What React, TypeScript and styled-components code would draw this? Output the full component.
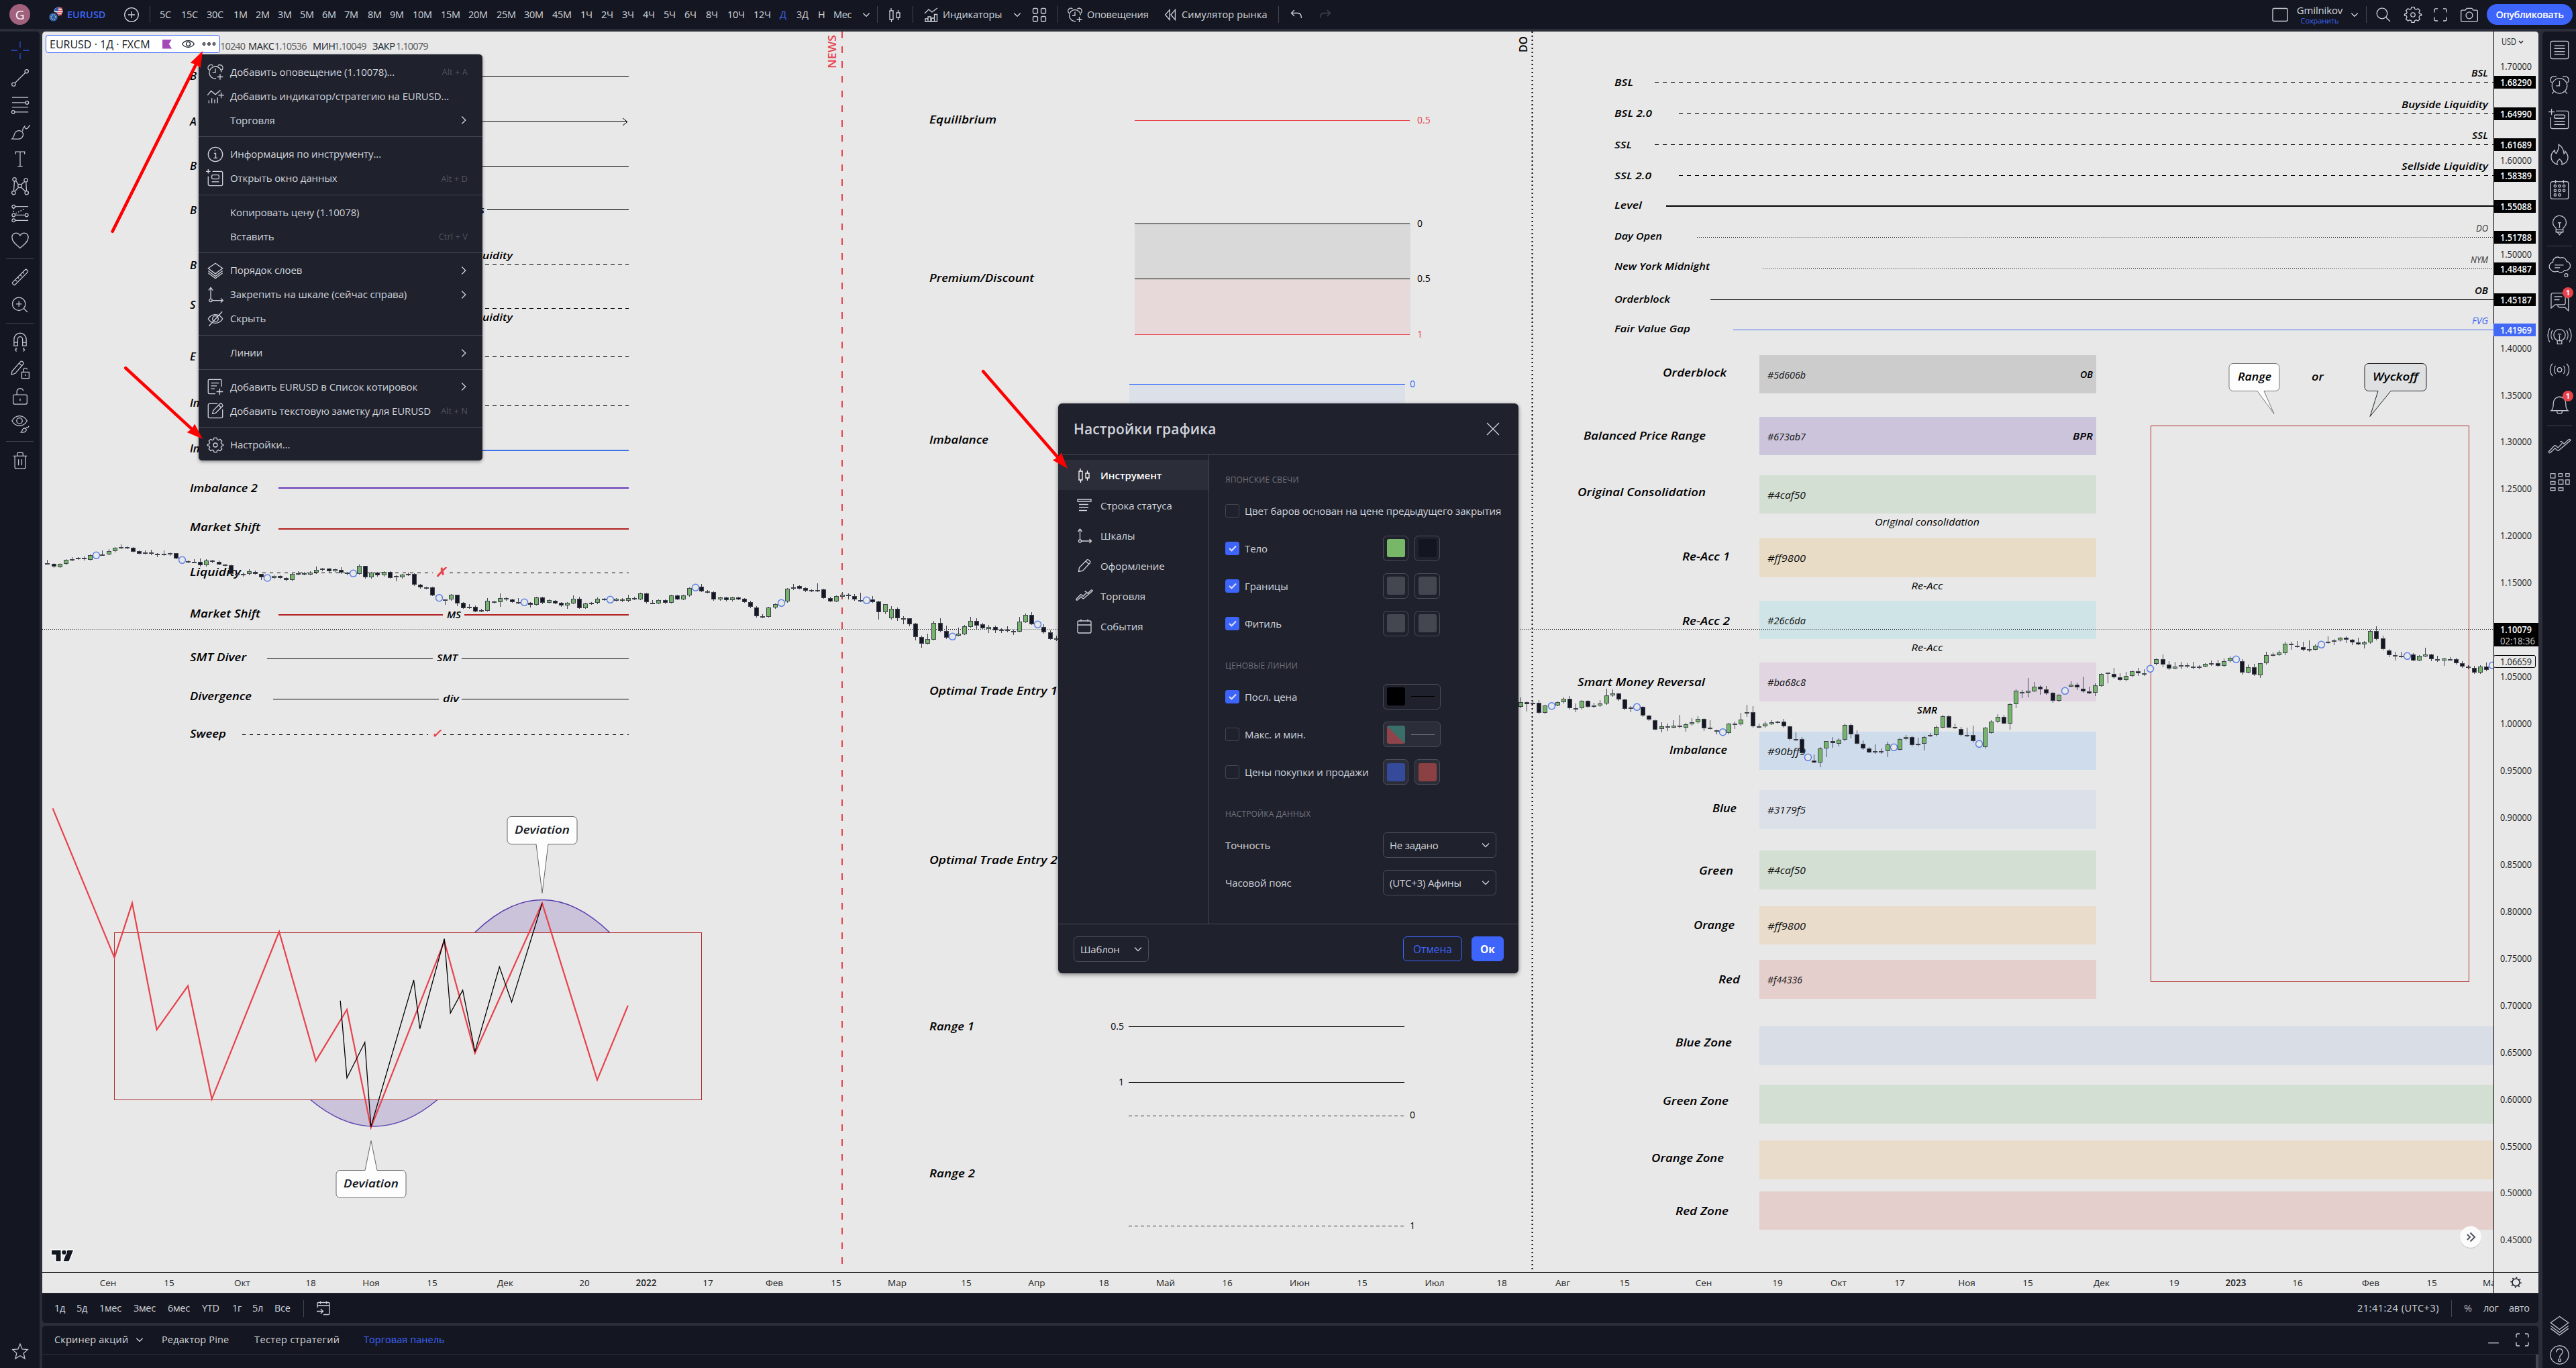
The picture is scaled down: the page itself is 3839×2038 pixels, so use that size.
import React from "react";
import styled, { createGlobalStyle, css } from "styled-components";

const font = `"Trebuchet MS", "Open Sans", "Noto Sans", sans-serif`;
const c = {
  panel: "#141721",
  gap: "#2b2d38",
  popup: "#1f212c",
  line: "#434651",
  text: "#d1d4dc",
  muted: "#787b86",
  blue: "#3d64fb",
  chart: "#e8e8e8",
  red: "#e8424c",
};

const Global = createGlobalStyle`
  * { box-sizing: border-box; }
  body { margin: 0; background: ${c.gap}; font-family: ${font}; }
`;

/* ---------- icons ---------- */
const Svg = styled.svg`
  display: block;
  flex: none;
  fill: none;
  stroke: currentColor;
  stroke-width: 1.3px;
  overflow: visible;
  & * { vector-effect: non-scaling-stroke; }
`;

const icons: Record<string, React.ReactNode> = {
  cross: <path d="M14 3v7.500M14 17.500V25M3 14h7.500M17.500 14H25" />,
  line: (
    <>
      <circle cx="6" cy="22" r="2.200" />
      <circle cx="22" cy="6" r="2.200" />
      <path d="M7.600 20.400L20.400 7.600" />
    </>
  ),
  fib: (
    <>
      <path d="M4 5h20M4 11.500h16.500M4 17h20M7.500 23H24" />
      <circle cx="22.500" cy="11.500" r="1.900" />
      <circle cx="5.500" cy="23" r="1.900" />
    </>
  ),
  brush: (
    <path d="M4 23c3-2 2-6 4.500-8.500s6-2 8 0 1.500 5.500-1 7.500S8 23 4 23zM17 13.500c0-3 1-4.500 2.500-6 0 3 2 3.500 3.500 2.500s1.500-2.500 3-4" />
  ),
  text: <path d="M8.500 8V5h11v3M14 5v18M11 23h6" />,
  xabcd: (
    <>
      <circle cx="7" cy="6" r="2.200" />
      <circle cx="21" cy="7" r="2.200" />
      <circle cx="13.500" cy="14" r="2.200" />
      <circle cx="6" cy="22.500" r="2.200" />
      <circle cx="22" cy="22.500" r="2.200" />
      <path d="M7 8.200l-.8 12.100M8.600 7.600l3.400 4.800M19.600 8.600L15 12.500M21.200 9.200l.6 11.100M12 15.800l-4.600 5M15.200 15.600l5.200 5.200" />
    </>
  ),
  projection: (
    <>
      <circle cx="6" cy="5.500" r="1.900" />
      <circle cx="6" cy="16" r="1.900" />
      <circle cx="22" cy="16" r="1.900" />
      <circle cx="6" cy="22.500" r="1.900" />
      <path d="M8 5.500h16M8 16h12M8 22.500h16" />
      <path d="M6 7.500V14M8.500 14L20 8" strokeDasharray="2 2" />
    </>
  ),
  heart: (
    <path d="M14 23.500C10 20 4 16 4 10.500 4 7 6.500 5 9 5c2.500 0 4 1.500 5 3.200C15 6.500 16.500 5 19 5c2.500 0 5 2 5 5.500C24 16 18 20 14 23.500z" />
  ),
  ruler: (
    <path d="M4.500 20.500l16-16c.8-.8 3.800 2.200 3 3l-16 16c-.8.8-3.800-2.200-3-3zM8 17l2 2M11 14l1.500 1.500M14 11l2 2M17 8l1.500 1.500" />
  ),
  zoomIn: (
    <>
      <circle cx="12.500" cy="13" r="8" />
      <path d="M18.500 18.500L23 23M12.500 9.500v7M9 13h7" />
    </>
  ),
  search: (
    <>
      <circle cx="12" cy="12" r="7.800" />
      <path d="M17.800 17.800L24 24" />
    </>
  ),
  magnet: (
    <path d="M6.500 19v-8a7.500 7.500 0 0 1 15 0v8h-4.500v-8a3 3 0 0 0-6 0v8zM6.500 15h4.500M17 15h4.500M8.500 21.500l1 1.500-1.500 1 1.500 2M19 21.500l-1 1.500 1.500 1-1.500 2" />
  ),
  pencilLock: (
    <path d="M4 17.500L14.500 5.500c1.500-1.500 5 1.500 3.500 3L8 20l-4.500 1.500zM13 7.500l3 3M16 18.500h9V26h-9zM18 18.500v-2.500a2.500 2.500 0 0 1 4.800-1M20.500 21v2" />
  ),
  lock: (
    <path d="M7 12.500h14a1.500 1.500 0 0 1 1.500 1.500v8a2 2 0 0 1-2 2h-13a2 2 0 0 1-2-2v-8A1.500 1.500 0 0 1 7 12.500zM10 12.500V8.500a4 4 0 0 1 7.800-1M14 17v3" />
  ),
  eyeBrush: (
    <>
      <path d="M4 11.500c4.500-8 14-8 18.500 0-4.500 8-14 8-18.500 0z" />
      <circle cx="13.200" cy="11.500" r="3.500" />
      <path d="M15 25.500c2-1 1-3 3-4.500 1.500-1 4 0 3.500 2s-3 3-6.500 2.500zM21 20c1-1 1 .5 2 0s1-1.500 2-2" />
    </>
  ),
  trash: (
    <path d="M5.500 8.500h17M10.500 8V5.500a1 1 0 0 1 1-1h5a1 1 0 0 1 1 1V8M7.500 8.500V22a2 2 0 0 0 2 2h9a2 2 0 0 0 2-2V8.500M12 12.500v7.500M16 12.500v7.500" />
  ),
  star: (
    <path d="M14 4l3 7.200 7.500.6-5.700 5 1.800 7.500L14 20.200l-6.600 4.100 1.800-7.500-5.700-5 7.500-.6z" />
  ),
  plusCircle: (
    <>
      <circle cx="14" cy="14" r="10.300" />
      <path d="M14 9v10M9 14h10" />
    </>
  ),
  chevron: <path d="M9 11.500l5 5 5-5" />,
  chevronRight: <path d="M11 8l6 6-6 6" />,
  candles: (
    <path d="M8 4v4M6 8h5v13H6zM8.500 21v4M18.500 7v4M16 11h5v7h-5zM18.500 18v4" />
  ),
  indicators: (
    <path d="M4 12l6-6 5 4 8-6M4 24h19M5 24v-4h4v4M9 24v-7h4v7M14 24v-5h4M18.500 24V13.500h4V24" />
  ),
  indicatorsPlus: (
    <path d="M3 13l5-6 6 5 7-6M5 24v-4M9 24v-7M13 24v-5M17 24v-8M22 9v8M18 13h8" />
  ),
  grid: (
    <>
      <rect x="4.500" y="4.500" width="7" height="7.500" rx="2" />
      <rect x="16.500" y="4.500" width="7" height="7.500" rx="2" />
      <rect x="4.500" y="16.500" width="7" height="7.500" rx="2" />
      <rect x="16.500" y="16.500" width="7" height="7.500" rx="2" />
    </>
  ),
  alarm: (
    <>
      <circle cx="14" cy="15" r="8.500" />
      <path d="M14 9.500V15h-4M5.200 11.500A4 4 0 0 1 10.500 5.200M22.800 11.500A4 4 0 0 0 17.500 5.200M7.500 21.500l-2 2.500M20.500 21.500l2 2.500" />
    </>
  ),
  alarmPlus: (
    <path d="M14 9.500V15h-4M5.200 11.500A4 4 0 0 1 10.500 5.200M22.800 11.500A4 4 0 0 0 17.500 5.200M15 23.500A8.500 8.500 0 1 1 22.500 14.500M20.500 17v8M16.500 21h8" />
  ),
  rewind: <path d="M13 6l-7 8 7 8zM22 6l-7 8 7 8z" />,
  undo: <path d="M11 7l-4.500 4.500L11 16M6.500 11.500H16c4 0 5.500 3 5.500 7.500" />,
  redo: <path d="M17 7l4.500 4.500L17 16M21.500 11.500H12c-4 0-5.500 3-5.500 7.500" />,
  rect: <rect x="3" y="4.500" width="22" height="19" rx="2" />,
  gear: (
    <>
      <circle cx="14" cy="14" r="2.800" />
      <path d="M12.200 4h3.600l.6 2.400 1.900.8 2.200-1.300 2.600 2.600-1.300 2.200.8 1.900 2.400.6v1.600l-2.400.6-.8 1.900 1.300 2.200-2.600 2.600-2.200-1.300-1.900.8-.6 2.400h-3.600l-.6-2.400-1.900-.8-2.200 1.300-2.600-2.600 1.300-2.200-.8-1.900-2.400-.6v-1.600l2.400-.6.8-1.900-1.300-2.200 2.600-2.600 2.200 1.300 1.900-.8z" />
    </>
  ),
  full: (
    <path d="M5 10.500V7a2 2 0 0 1 2-2h3M18 5h3a2 2 0 0 1 2 2v3.500M23 17.500V21a2 2 0 0 1-2 2h-3M10 23H7a2 2 0 0 1-2-2v-3.500" />
  ),
  camera: (
    <>
      <path d="M4 7.500h4.500L10.500 5h7l2 2.500H24a1.500 1.500 0 0 1 1.500 1.500v13a1.500 1.500 0 0 1-1.500 1.500H4A1.500 1.500 0 0 1 2.500 22V9A1.500 1.500 0 0 1 4 7.500z" />
      <circle cx="14" cy="14.800" r="4.600" />
    </>
  ),
  list: (
    <>
      <rect x="4" y="4" width="20" height="20" rx="2" />
      <path d="M8 9h12M8 12.300h12M8 15.700h12M8 19h12" />
    </>
  ),
  dataWindow: (
    <>
      <path d="M10 4h12a2 2 0 0 1 2 2v16a2 2 0 0 1-2 2H6a2 2 0 0 1-2-2V11M5 1.500v7M1.500 5h7" />
      <rect x="8" y="8.500" width="12" height="3.800" rx="1.500" />
      <path d="M8 15.700h12M8 19.200h12" />
    </>
  ),
  panelPlus: (
    <>
      <path d="M10 4h12a2 2 0 0 1 2 2v16a2 2 0 0 1-2 2H6a2 2 0 0 1-2-2V11M4 1v6M1 4h6" />
      <rect x="9" y="9" width="10" height="5.500" rx="1.500" />
      <path d="M9 18.500h10" />
    </>
  ),
  fire: (
    <path d="M11.500 25C7 23.500 4.500 20.500 4.500 16.500c0-4 2-6 4-7.500 0 2 .5 3 2 3.500 1.500-4 3.500-5 2.500-10 4 2 5.500 6 6 10.500 1-.5 1.300-1.500 1.200-3C22 12 23.500 14 23.500 17c0 4-2.500 6.800-7 8 1-2 .5-3.500-2.500-6-3 2.500-3.500 4-2.500 6z" />
  ),
  calendarDots: (
    <>
      <rect x="4" y="5" width="20" height="19.500" rx="2" />
      <path d="M9.500 3v4M18.500 3v4" />
      {[9, 14, 19].map((x) =>
        [10, 15, 20].map((y) =>
          x === 19 && y === 20 ? null : <circle key={`${x}${y}`} cx={x} cy={y} r="1.300" />
        )
      )}
    </>
  ),
  bulb: (
    <path d="M10 20v-2c-2-1.500-3.500-4-3.500-6.500a7.500 7.500 0 0 1 15 0c0 2.500-1.500 5-3.500 6.500v2zM10 20v2.500h8V20M11.500 22.500l2.500 3 2.500-3M12 12h4M14 12v6" />
  ),
  cloud: (
    <>
      <path d="M6.500 9C6 4.500 11 1.500 14.500 4c3.500-1.500 7 .5 7.500 4 4 .5 5.500 5.500 2.500 8.500-1.500 1.500-3 2-5 1.500-1.500 2.500-5 3.500-7.500 1-3.500 1-6.500.5-8-2-3-2.500-1.500-7.500 2.500-8zM8.500 12h10M8.500 15h6" />
      <circle cx="21.500" cy="23.500" r="1.800" />
    </>
  ),
  chat: (
    <path d="M4.500 22V7a2 2 0 0 1 2-2h12a2 2 0 0 1 2 2v9a2 2 0 0 1-2 2H9zM8 9h9M8 12.500h6M22 10a2 2 0 0 1 2 2v13l-4-4h-6a2 2 0 0 1-2-2" />
  ),
  stream: (
    <>
      <circle cx="14" cy="13" r="6.500" />
      <path d="M14 13v6M12 12h4M11.500 19v4h5v-4M6 7.500c-2 3.500-2 8 0 11M22 7.500c2 3.500 2 8 0 11M3 5.500c-3 5-3 11 0 15.500M25 5.500c3 5 3 11 0 15.500" />
    </>
  ),
  radio: (
    <>
      <circle cx="14" cy="13.500" r="2.500" />
      <path d="M9.500 9c-2 2.500-2 6.500 0 9M18.500 9c2 2.500 2 6.500 0 9M6 6.500c-3.500 4-3.500 10 0 14M22 6.500c3.500 4 3.500 10 0 14" />
    </>
  ),
  bell: (
    <path d="M4.500 21c2-1.500 2.500-4 2.500-8 0-4 2.500-7.500 7-7.500s7 3.500 7 7.500c0 4 .5 6.500 2.500 8zM11 21.500c0 4 6 4 6 0" />
  ),
  zigzag: (
    <path d="M2 18.500L8 12.300c.6-.6 1.400-.6 2 0l2.200 2 4.800-4.800M2 18.500c-.8 1 .6 2.200 1.600 1.400L9 15l2.300 2.200c.6.600 1.400.600 2 0L26 6.500c.8-1-.6-2.200-1.600-1.400L19 10l-2.300-2.200c-.6-.6-1.400-.6-2 0" />
  ),
  dom: (
    <path d="M4 5h5v5H4zM4 14h5v3H4zM4 21h5v3H4zM13 5h4v3h-4zM21 5h4v3h-4zM13 12h5v5h-5zM21 12h4v5h-4zM13 21h5v3h-5z" />
  ),
  layers: (
    <path d="M14 4l10 7-10 7.500L4 11zM4 14.500l10 7.500 10-7.500M4 17.500l10 7.500 10-7.500" />
  ),
  help: (
    <>
      <circle cx="14" cy="14" r="10.300" />
      <path d="M10.500 11c0-5 7-5 7-.500 0 3-3.500 3-3.500 6.500" />
      <circle cx="14" cy="20" r="1.500" />
    </>
  ),
  info: (
    <>
      <circle cx="14" cy="14" r="10" />
      <path d="M12 12.500h2.500V19M11.500 19h5.500M13.500 8v1.500" />
    </>
  ),
  pin: (
    <>
      <path d="M7.500 20V4M4.500 8l3-4 3 4M9.500 22H24M21.500 19l3 3-3 3" />
      <circle cx="7.500" cy="22" r="2" />
    </>
  ),
  hide: (
    <>
      <path d="M4 14c4.500-8 15.500-8 20 0-4.500 8-15.500 8-20 0z" />
      <circle cx="14" cy="14" r="4" />
      <path d="M5 24L23.500 4" />
    </>
  ),
  eye: (
    <>
      <path d="M1 14c5.500-9.500 20.500-9.500 26 0-5.500 9.500-20.500 9.500-26 0z" />
      <circle cx="14" cy="14" r="4.500" />
    </>
  ),
  dots: (
    <>
      <circle cx="3" cy="14" r="2.600" />
      <circle cx="14" cy="14" r="2.600" />
      <circle cx="25" cy="14" r="2.600" />
    </>
  ),
  listPlus: (
    <path d="M22.500 14V5.500a1.500 1.500 0 0 0-1.500-1.500H5.500A1.500 1.500 0 0 0 4 5.500v17A1.500 1.500 0 0 0 5.500 24H14M8 9h11M8 13h8M8 17h5M20 16.500v9M15.500 21h9" />
  ),
  note: (
    <path d="M17 4H6a2 2 0 0 0-2 2v16a2 2 0 0 0 2 2h16a2 2 0 0 0 2-2V12M10 18l1-4.500L20.500 4c1.500-1 4.500 2 3.500 3.500L14.500 17zM18.500 6l3.500 3.500" />
  ),
  status: <path d="M4 5h20v3H4zM6 12.500h14M6 17h14M6 21.500h12" />,
  pencil: <path d="M5.500 22.500l1-6L18 5c1.500-1.500 6 2.500 4.500 4.500L11.500 21.500zM16 7l5 4.500" />,
  calendar: (
    <path d="M6 6h16a2 2 0 0 1 2 2v14a2 2 0 0 1-2 2H6a2 2 0 0 1-2-2V8a2 2 0 0 1 2-2zM4 12h20M9 3.500V7M19 3.500V7" />
  ),
  goTo: (
    <path d="M5 13V7a1.500 1.500 0 0 1 1.500-1.500h15A1.500 1.500 0 0 1 23 7v15a1.500 1.500 0 0 1-1.500 1.500H14M5 10h18M9.500 3.500v4M18.500 3.500v4M4 18.500h9M10 15l3.500 3.500L10 22" />
  ),
  close: <path d="M5 5l18 18M23 5L5 23" />,
  minimize: <path d="M4 20h20" />,
};

const Icon = ({ name, size = 28 }: { name: string; size?: number }) => (
  <Svg width={size} height={size} viewBox="0 0 28 28">
    {icons[name]}
  </Svg>
);

/* ---------- page frame ---------- */
const Page = styled.div`
  position: relative;
  display: flex;
  flex-direction: column;
  gap: 4px;
  width: 3839px;
  height: 2038px;
  overflow: hidden;
  color: ${c.text};
  font-size: 14px;
  white-space: nowrap;
`;
const Body = styled.div`
  display: flex;
  flex: 1;
  min-height: 0;
`;
const Center = styled.div`
  display: flex;
  flex-direction: column;
  width: 3720px;
  margin: 0 6px 0 4px;
`;

/* ---------- top bar ---------- */
const TopBar = styled.header`
  display: flex;
  align-items: center;
  height: 43px;
  padding-left: 14px;
  background: ${c.panel};
`;
const Cell = styled.div<{ $w: number; $color?: string; $ls?: number }>`
  display: flex;
  flex: none;
  align-items: center;
  width: ${(p) => p.$w}px;
  color: ${(p) => p.$color ?? c.text};
  letter-spacing: ${(p) => p.$ls ?? -0.3}px;
  font-size: 14.5px;
`;
const Label = styled(Cell)`
  padding-bottom: 1px;
`;
const Avatar = styled.div`
  display: grid;
  place-items: center;
  width: 31px;
  height: 31px;
  border-radius: 50%;
  background: #a1617c;
  color: #fff;
  font-size: 19px;
`;
const Divider = styled.i`
  width: 1px;
  height: 25px;
  background: ${c.line};
`;
const Ticker = styled(Label)`
  font-weight: 600;
`;
const Spacer = styled.div`
  flex: 1;
`;
const Account = styled.div`
  display: flex;
  flex-direction: column;
  align-items: center;
  width: 70px;
  margin-right: 4px;
  font-size: 15px;
  line-height: 17px;
  letter-spacing: -0.15px;
  small {
    color: ${c.blue};
    font-size: 11px;
    line-height: 13px;
    letter-spacing: -0.1px;
  }
`;
const Publish = styled.button`
  width: 128px;
  height: 31px;
  margin-right: 5px;
  padding: 0;
  border: 0;
  border-radius: 16px;
  background: ${c.blue};
  color: #fff;
  font: 600 14.5px ${font};
  letter-spacing: -0.45px;
`;

const intervals: [string, number][] = [
  ["5С", 32], ["15С", 38], ["30С", 40], ["1М", 33], ["2М", 33], ["3М", 33],
  ["5М", 33], ["6М", 33], ["7М", 35], ["8М", 33], ["9М", 34], ["10М", 42],
  ["15М", 41], ["20М", 42], ["25М", 41], ["30М", 42], ["45М", 42], ["1Ч", 31],
  ["2Ч", 31], ["3Ч", 31], ["4Ч", 31], ["5Ч", 31], ["6Ч", 32], ["8Ч", 32],
  ["10Ч", 39], ["12Ч", 39], ["Д", 25], ["3Д", 32], ["Н", 23], ["Мес", 36],
];

const Flags = () => (
  <Svg width="20" height="30" viewBox="0 0 20 30" stroke="none">
    <circle cx="14" cy="10" r="6.500" fill="#e9eaf0" stroke="none" />
    <path d="M14 5h6M14 8.500h6.500M8 12h12M10 15h9" stroke="#d8434e" strokeWidth="1.500" />
    <path d="M8 9.500a6.500 6.500 0 0 1 6-6v6z" fill="#2d5bb5" stroke="none" />
    <circle cx="6.500" cy="18.500" r="7" fill="#2b62b8" stroke={c.panel} strokeWidth="1.500" />
    <circle cx="6.500" cy="18.500" r="3.600" stroke="#f3d24c" strokeWidth="1.300" strokeDasharray="1.300 1.600" />
  </Svg>
);

const Top = () => (
  <TopBar>
    <Cell $w={59}><Avatar>G</Avatar></Cell>
    <Cell $w={27}><Flags /></Cell>
    <Ticker $w={82} $color={c.blue} $ls={0}>EURUSD</Ticker>
    <Cell $w={41}><Icon name="plusCircle" /></Cell>
    <Cell $w={15}><Divider /></Cell>
    {intervals.map(([t, w]) => (
      <Label key={t} $w={w} $color={t === "Д" ? c.blue : undefined}>{t}</Label>
    ))}
    <Cell $w={29}><Icon name="chevron" size={26} /></Cell>
    <Cell $w={13}><Divider /></Cell>
    <Cell $w={40}><Icon name="candles" /></Cell>
    <Cell $w={14}><Divider /></Cell>
    <Cell $w={31}><Icon name="indicators" /></Cell>
    <Label $w={98} $ls={-0.05}>Индикаторы</Label>
    <Cell $w={32}><Icon name="chevron" size={26} /></Cell>
    <Cell $w={41}><Icon name="grid" /></Cell>
    <Cell $w={12}><Divider /></Cell>
    <Cell $w={32}><Icon name="alarmPlus" /></Cell>
    <Label $w={111} $ls={-0.15}>Оповещения</Label>
    <Cell $w={30}><Icon name="rewind" size={26} /></Cell>
    <Label $w={144} $ls={0.15}>Симулятор рынка</Label>
    <Cell $w={13}><Divider /></Cell>
    <Cell $w={43}><Icon name="undo" /></Cell>
    <Cell $w={40} $color={c.line}><Icon name="redo" /></Cell>
    <Spacer />
    <Cell $w={38}><Icon name="rect" /></Cell>
    <Account>Gmilnikov<small>Сохранить</small></Account>
    <Cell $w={30}><Icon name="chevron" size={26} /></Cell>
    <Cell $w={12}><Divider /></Cell>
    <Cell $w={42}><Icon name="search" /></Cell>
    <Cell $w={43}><Icon name="gear" size={32} /></Cell>
    <Cell $w={42}><Icon name="full" /></Cell>
    <Cell $w={41}><Icon name="camera" size={30} /></Cell>
    <Publish>Опубликовать</Publish>
  </TopBar>
);

/* ---------- side rails ---------- */
const Rail = styled.nav<{ $w: number; $side: "left" | "right" }>`
  display: flex;
  flex: none;
  flex-direction: column;
  align-items: center;
  width: ${(p) => p.$w}px;
  padding-top: ${(p) => (p.$side === "left" ? 8 : 1)}px;
  background: ${c.panel};
  ${(p) =>
    p.$side === "left"
      ? css`border-top-right-radius: 5px;`
      : css`border-top-left-radius: 5px;`}
`;
const RailButton = styled.div<{ $h: number; $color?: string }>`
  position: relative;
  display: grid;
  flex: none;
  place-items: center;
  width: 100%;
  height: ${(p) => p.$h}px;
  color: ${(p) => p.$color ?? "#c1c4cd"};
`;
const RailLine = styled.i<{ $w: number; $m: number }>`
  flex: none;
  width: ${(p) => p.$w}px;
  height: 1px;
  margin: ${(p) => p.$m}px 0;
  background: ${c.line};
`;
const Badge = styled.span`
  position: absolute;
  top: 5px;
  right: 4px;
  width: 16px;
  height: 16px;
  border-radius: 50%;
  background: ${c.red};
  color: #fff;
  font-size: 11px;
  font-weight: 700;
  line-height: 16px;
  text-align: center;
`;

const LeftRail = () => (
  <Rail $w={59} $side="left">
    {["cross", "line", "fib", "brush", "text", "xabcd", "projection", "heart", "|", "ruler", "zoomIn", "|",
      "magnet", "pencilLock", "lock", "eyeBrush", "|", "trash"].map((n, i) =>
      n === "|" ? (
        <RailLine key={i} $w={41} $m={7} />
      ) : (
        <RailButton key={i} $h={40.4} $color={n === "cross" ? "#2b4fd8" : undefined}>
          <Icon name={n} size={34} />
        </RailButton>
      )
    )}
    <Spacer />
    <RailButton $h={50}><Icon name="star" size={30} /></RailButton>
  </Rail>
);

const RightRail = () => (
  <Rail $w={50} $side="right">
    {["list", "alarm", "dataWindow", "fire", "calendarDots", "bulb", "|", "cloud", "chat", "stream", "radio", "bell",
      "|", "zigzag", "dom"].map((n, i) =>
      n === "|" ? (
        <RailLine key={i} $w={37} $m={5.5} />
      ) : (
        <RailButton key={i} $h={i < 6 ? 52 : 51.3}>
          <Icon name={n} size={37} />
          {(n === "chat" || n === "bell") && <Badge>1</Badge>}
        </RailButton>
      )
    )}
    <Spacer />
    <RailButton $h={50}><Icon name="layers" size={37} /></RailButton>
    <RailButton $h={39}><Icon name="help" size={37} /></RailButton>
  </Rail>
);

/* ---------- chart ---------- */
const ChartSvg = styled.svg`
  display: block;
  flex: none;
  background: ${c.chart};
  border-radius: 5px 5px 0 0;
`;
const ChartText = styled.text<{ $bold?: boolean; $italic?: boolean }>`
  font-family: ${font};
  font-weight: ${(p) => (p.$bold ? 600 : 400)};
  font-style: ${(p) => (p.$italic ? "italic" : "normal")};
`;

interface TProps {
  x: number;
  y: number;
  t: string;
  w?: number;
  size?: number;
  b?: boolean;
  i?: boolean;
  fill?: string;
  a?: "start" | "middle" | "end";
  transform?: string;
}
const T = ({ x, y, t, w, size = 14, b, i, fill = "#000", a = "start", transform }: TProps) => (
  <ChartText
    x={x}
    y={y}
    fontSize={size}
    fill={fill}
    textAnchor={a}
    textLength={w}
    lengthAdjust="spacingAndGlyphs"
    transform={transform}
    $bold={b}
    $italic={i}
  >
    {t}
  </ChartText>
);

/* Candles: "g|b top,bottom[,high[,low]]", "o y" is a roll marker; values in thirds of a pixel from base. */
const series: { k: number; base: number; bars: string }[] = [
  {
    k: -1,
    base: 680,
    bars:
      "b478,480,462,483 b479,493,476 g481,494 g463,481,460 g458,463,450 g452,458,449 b452,460 g442,461,438 o442 b437,440,420 g424,437,415 g409,424 b405,409,394 b406,409,402 b409,425 b424,434 b430,434,420 b430,436,417 b434,437,433,449 b436,439,419 g433,439,429 b433,455,432,458 o463 b469,473 b470,473,459 b472,487,456 g466,487,460 b466,472 b470,482 b483,487 b487,524 b524,532,518 g526,532,518 g514,526,504 b515,524 b524,541,524,551 o543 g534,544 b534,543 b543,553 g526,553 b523,526,514 b523,526,516 g520,527,513 g508,520,493 g502,508,497 b502,514 g505,514,500 b508,520,495 b520,525 o523 g490,524,484 b490,539,488,547 g520,541 b520,531 g517,531 b517,542 g535,541,532,557 g528,541 b526,530,520 b526,574 b574,586 b586,589 b586,620 o632 b638,641,638,662 g619,640 b619,658,619,668 b655,677 g671,677,660 b671,692 b688,691,680 g646,689,633 b648,652 g634,652,613,673 b634,640 b640,650 b650,652,632,660 o652 b655,662,650,676 g631,662 b631,655 g643,653 b646,656 b655,667 g655,667,650,680 g637,656,622 b637,677,627 g658,677 b655,659 g637,655,630 b637,641 o640 g637,644 b638,646 g632,646,618 b632,638 g613,638 b613,652 b653,656,643 g643,656 b643,654 g622,653 b622,638 g622,638 g588,622 o586 b583,602,571 b602,606 b607,640 g631,640 b631,643 g631,643 b631,638 b637,650 b650,673 b674,715 b713,716,705,722 g676,716 g661,676 o655 g592,649 g586,592,570 b580,590 b589,601 b598,602 b596,600,568 b595,632 b632,647 g625,647 g619,626,606",
  },
  {
    k: 130,
    base: 700,
    bars:
      "b559,565,553,578 b565,580,556 b583,586,550 o583 b579,590,564 b588,635,585,668 g601,635,601,644 g622,664,610 b622,664,616,674 b663,665,655,689 b664,689,664,698 b688,746,685,761 b748,776,742,794 g757,776,732 g685,758,676 b685,721,664 b721,751,697 o745 g733,740,706 g700,734,694 g676,701,657 b676,695,664,711 b691,709,685 g703,710,694,728 b703,716,697,728 b714,716,709,728 b715,721,699 b720,722,715,738 g679,722,658 g649,680,643 b649,689,637 o691 b703,727,691 b727,755,718 b754,760,742",
  },
  {
    k: 240,
    base: 740,
    bars:
      "g919,940,898 b919,926,915,960 g922,928,915 b922,967,910 g934,967,931 o935 g919,932 g904,919,898 b904,946,892 b945,948,925,962 g913,946 b913,940 g934,940,920 g925,934,910 g889,925,858 g880,889,862 b880,907 b907,949,902 g943,949,935,962 o940 b940,979 b979,997 b1000,1040 g1027,1039,1007,1054 b1027,1031,1015,1048 g1024,1031,1000 b1024,1030,976 g1018,1031,1010,1049 g1009,1018,990 g994,1009,982 b994,1036,990,1048 b1033,1036,1000 b1045,1049,1040,1063 o1052 g1015,1055,1010,1063 b1015,1018,1004,1038 g997,1018,966 g964,970,931,985 b964,1027,937 b1026,1029,1015 g1015,1026,1006 g1009,1016,1000 b1006,1010 b1006,1027,994 b1027,1084 b1083,1086,1054 b1084,1147,1075 o1165 b1180,1187,1153 g1126,1187,1120,1208 g1093,1126,1093,1165 b1093,1100,1075,1123 g1087,1105,1080,1115 g1021,1087,1015 b1021,1063,1015,1080 b1063,1103,1045 b1103,1125,1090 b1126,1142,1118 b1138,1141,1108,1150 b1138,1141,1126,1150 g1108,1138,1096,1165 o1120 g1084,1130,1078 g1075,1084,1066 b1075,1111,1069 g1105,1111,1078 g1075,1105,1069,1135 b1066,1069,1055 g1030,1066,1024 g982,1031,976 b982,1031,976 b1030,1033,1015 b1039,1066,1030 b1066,1069,1033 b1066,1093,1024 o1105 g1033,1120,1028 g1006,1055,1000 g985,1006,973 b985,1013,976 g928,1013,922,1040 g868,928,862,945",
  },
  {
    k: 322,
    base: 840,
    bars:
      "b573,577,565,600 g568,577,510,597 g549,569,529 b549,562,543,585 b562,580,546 b577,613,573,620 g586,613 o568 g541,548,525 b541,553,532,563 b559,571,504 b571,578,550 g544,577,535,590 g493,545,489 g487,493,485,534 b493,508,466 b508,520,490 g502,520,484 g481,502,477 b481,490,466,500 b489,493,472,500 o469 g427,448,422 b427,451,406,463 b451,469,436 g460,467,439 g454,460,437,470 b454,460,445 b460,466,438 g458,466 g448,458 b445,448,433,457 b445,457,430 g436,457,424 g421,436,414 o427 b436,485,427,494 g463,485,450 b463,496,448 g445,497,445,509 g409,445,394 b406,409,397 g397,407,388 g358,398,349,407 b358,364,349,385 b367,371,346 b371,385,349 b382,386,343,392 g367,383,360 o361 b349,353,324 g343,349,336,362 g331,343 b331,340,324,355 b340,352,336,362 b352,359,331 g352,359,346,377 g301,352,295 b301,335,280,342 b334,382,320 b388,409,380,416 b409,413,394,431 b412,416,394 o412 b406,431,398 g412,431,408 g406,413,376 b406,427,403,434 b427,433,412 g424,433,420,455 b426,428,418 b427,445,421 b445,460,436 b460,466,454 b466,487,457 g460,487,454 b460,475,442 o454",
  },
];

const Candles = () => (
  <g>
    {series.flatMap(({ k, base, bars }) =>
      bars.split(" ").map((s, j) => {
        const x = Math.round(79.6 + 9.11 * (k + j));
        const v = s.slice(1).split(",").map((n) => base + Number(n) / 3);
        const key = `${k}-${j}`;
        if (s[0] === "o")
          return <circle key={key} cx={x + 0.5} cy={v[0]} r="5" fill={c.chart} stroke="#5c80e6" strokeWidth="1.5" />;
        const [top, bottom, high = top - 1.5, low = bottom + 1.5] = v;
        const y = Math.round(top);
        return (
          <g key={key}>
            <path d={`M${x + 0.5} ${Math.round(high)}V${Math.round(low)}`} stroke="#40434e" />
            <rect
              x={x - 2.5}
              y={y + 0.5}
              width="6"
              height={Math.max(1, Math.round(bottom) - y - 1)}
              fill={s[0] === "g" ? "#75b56a" : "#151722"}
              stroke="#40434e"
            />
          </g>
        );
      })
    )}
  </g>
);

interface LProps {
  x1: number;
  x2: number;
  y: number;
  color?: string;
  w?: number;
  dash?: string;
}
const H = ({ x1, x2, y, color = "#000", w = 1, dash }: LProps) => (
  <path d={`M${x1} ${y}H${x2}`} stroke={color} strokeWidth={w} strokeDasharray={dash} />
);

/* label, label width, label baseline, line start, line y, dash, tag text, price */
const levels: [string, number, number, number, number, string | undefined, string, string][] = [
  ["BSL", 28, 128, 2466, 122.5, "6 6", "BSL", "1.68290"],
  ["BSL 2.0", 56, 174, 2502, 169.5, "6 6", "Buyside Liquidity", "1.64990"],
  ["SSL", 26, 221, 2466, 215.5, "6 6", "SSL", "1.61689"],
  ["SSL 2.0", 55, 267, 2502, 261.5, "6 6", "Sellside Liquidity", "1.58389"],
  ["Level", 41, 311, 2483, 307, undefined, "", "1.55088"],
  ["Day Open", 71, 357, 2529, 353.5, "1 2", "DO", "1.51788"],
  ["New York Midnight", 142, 402, 2627, 400.5, "1 2", "NYM", "1.48487"],
  ["Orderblock", 83, 451, 2549, 446.5, undefined, "OB", "1.45187"],
  ["Fair Value Gap", 113, 495, 2583, 491.5, undefined, "FVG", "1.41969"],
];
const tagWidths: Record<string, number> = {
  BSL: 25, "Buyside Liquidity": 129, SSL: 24, "Sellside Liquidity": 129, DO: 18, NYM: 26, OB: 20, FVG: 24,
};

const zones: { y: number; h: number; fill: string; label: string; lx: number; lw: number; ly: number; code?: string; wide?: boolean }[] = [
  { y: 529, h: 57, fill: "#cccccd", label: "Orderblock", lx: 2478, lw: 95, ly: 561, code: "#5d606b" },
  { y: 621, h: 57, fill: "#cbc4da", label: "Balanced Price Range", lx: 2360, lw: 182, ly: 655, code: "#673ab7" },
  { y: 708, h: 57, fill: "#d4dfd3", label: "Original Consolidation", lx: 2351, lw: 191, ly: 739, code: "#4caf50" },
  { y: 802, h: 58, fill: "#e9dcc6", label: "Re-Acc 1", lx: 2507, lw: 71, ly: 835, code: "#ff9800" },
  { y: 895, h: 57, fill: "#cfe4e6", label: "Re-Acc 2", lx: 2507, lw: 71, ly: 931, code: "#26c6da" },
  { y: 987, h: 58, fill: "#e1d5e2", label: "Smart Money Reversal", lx: 2351, lw: 190, ly: 1022, code: "#ba68c8" },
  { y: 1090, h: 57, fill: "#cfdceb", label: "Imbalance", lx: 2488, lw: 86, ly: 1123, code: "#90bff9" },
  { y: 1177, h: 58, fill: "#dce0e9", label: "Blue", lx: 2552, lw: 36, ly: 1210, code: "#3179f5" },
  { y: 1267, h: 58, fill: "#d4dfd3", label: "Green", lx: 2532, lw: 51, ly: 1303, code: "#4caf50" },
  { y: 1350, h: 57, fill: "#e9dccb", label: "Orange", lx: 2524, lw: 61, ly: 1384, code: "#ff9800" },
  { y: 1430, h: 58, fill: "#e5cfcd", label: "Red", lx: 2561, lw: 32, ly: 1465, code: "#f44336" },
  { y: 1529, h: 58, fill: "#d8dde6", label: "Blue Zone", lx: 2497, lw: 84, ly: 1559, wide: true },
  { y: 1616, h: 58, fill: "#d2dfd2", label: "Green Zone", lx: 2478, lw: 98, ly: 1646, wide: true },
  { y: 1699, h: 58, fill: "#e9dccb", label: "Orange Zone", lx: 2461, lw: 108, ly: 1731, wide: true },
  { y: 1775, h: 57, fill: "#e5cfcd", label: "Red Zone", lx: 2497, lw: 79, ly: 1810, wide: true },
];

const times: [number, string][] = [
  [161, "Сен"], [252, "15"], [361, "Окт"], [463, "18"], [553, "Ноя"], [644, "15"], [753, "Дек"], [871, "20"],
  [963, "2022"], [1055, "17"], [1154, "Фев"], [1246, "15"], [1337, "Мар"], [1440, "15"], [1545, "Апр"],
  [1645, "18"], [1737, "Май"], [1829, "16"], [1937, "Июн"], [2030, "15"], [2138, "Июл"], [2238, "18"],
  [2329, "Авг"], [2421, "15"], [2539, "Сен"], [2649, "19"], [2740, "Окт"], [2831, "17"], [2931, "Ноя"],
  [3022, "15"], [3132, "Дек"], [3240, "19"], [3332, "2023"], [3424, "16"], [3533, "Фев"], [3624, "15"], [3714, "Мар"],
];

const bi = { b: true, i: true, size: 16.5 };
const leftLabels: [string, number, number?][] = [
  ["B", 119], ["A", 187], ["B", 253], ["B", 319], ["B", 401], ["S", 460], ["E", 537],
  ["In", 606], ["In", 674], ["Imbalance 2", 733, 101], ["Market Shift", 791, 105],
  ["Liquidity", 858, 76], ["Market Shift", 920, 105], ["SMT Diver", 985, 84], ["Divergence", 1043, 92], ["Sweep", 1099, 54],
];
const midLabels: [string, number, number][] = [
  ["Equilibrium", 184, 100], ["Premium/Discount", 420, 156], ["Imbalance", 661, 88], ["Optimal Trade Entry 1", 1035, 191],
  ["Optimal Trade Entry 2", 1287, 191], ["Range 1", 1535, 67], ["Range 2", 1754, 68],
];

const Chart = () => (
  <ChartSvg width="3720" height="1879" viewBox="63 47 3720 1879" fill="none">
    {/* fills */}
    {zones.map((z) => (
      <rect key={z.y} x="2622" y={z.y} width={z.wide ? 1094 : 502} height={z.h} fill={z.fill} />
    ))}
    <rect x="1691" y="333" width="411" height="82" fill="#d9d9d9" />
    <rect x="1691" y="415" width="411" height="84" fill="#e7d8d9" />
    <rect x="1683" y="573" width="411" height="60" fill="#dce0e9" />

    {/* left column */}
    {leftLabels.map(([t, y, w], k) => (
      <T key={k} x={283} y={y} t={t} w={w} {...bi} />
    ))}
    <H x1={415} x2={937} y={113.5} />
    <H x1={415} x2={934} y={181.5} />
    <path d="M928 176l7 5.500-7 5.500" stroke="#000" />
    <H x1={415} x2={937} y={248.5} />
    <H x1={726} x2={937} y={312.5} />
    <T x={722} y={318} t="s" a="end" {...bi} size={15} />
    <H x1={415} x2={937} y={394.5} dash="6 5" />
    <T x={764} y={386} t="uidity" w={45} a="end" {...bi} size={15} />
    <H x1={415} x2={937} y={459.5} dash="6 5" />
    <T x={764} y={478} t="uidity" w={45} a="end" {...bi} size={15} />
    <H x1={415} x2={937} y={531.5} dash="6 5" />
    <H x1={415} x2={937} y={604.5} dash="6 5" />
    <H x1={415} x2={937} y={671} color="#3e72e8" w={2} />
    <H x1={415} x2={937} y={727} color="#673ab7" w={2} />
    <H x1={415} x2={937} y={788} color="#b22020" w={2} />
    <H x1={391} x2={645} y={853.5} dash="5 6" />
    <H x1={670} x2={937} y={853.5} dash="5 6" />
    <T x={657} y={859} t="✗" a="middle" fill={c.red} {...bi} size={19} />
    <H x1={415} x2={660} y={916} color="#b22020" w={2} />
    <H x1={692} x2={937} y={916} color="#b22020" w={2} />
    <T x={666} y={921} t="MS" w={21} {...bi} size={15} />
    <H x1={398} x2={645} y={981.5} />
    <H x1={688} x2={937} y={981.5} />
    <T x={651} y={985} t="SMT" w={31} {...bi} size={15} />
    <H x1={407} x2={654} y={1041.5} />
    <H x1={688} x2={937} y={1041.5} />
    <T x={660} y={1046} t="div" w={24} {...bi} size={15} />
    <H x1={361} x2={638} y={1094.5} dash="5 6" />
    <H x1={660} x2={937} y={1094.5} dash="5 6" />
    <T x={650} y={1099} t="✓" a="middle" fill={c.red} {...bi} size={18} />

    {/* middle column */}
    {midLabels.map(([t, y, w], k) => (
      <T key={k} x={1385} y={y} t={t} w={w} {...bi} />
    ))}
    <H x1={1691} x2={2101} y={179.5} color={c.red} />
    <T x={2112} y={184} t="0.5" fill={c.red} />
    <H x1={1691} x2={2101} y={333.5} />
    <T x={2112} y={338} t="0" />
    <H x1={1691} x2={2101} y={415.5} />
    <T x={2112} y={420} t="0.5" />
    <H x1={1691} x2={2101} y={498.5} color={c.red} />
    <T x={2112} y={503} t="1" fill={c.red} />
    <H x1={1683} x2={2094} y={572.5} color="#2962ff" />
    <T x={2101} y={577} t="0" fill="#2962ff" />
    <T x={1672} y={1449} t="0" a="end" />
    <H x1={1682} x2={2093} y={1529.5} />
    <T x={1675} y={1534} t="0.5" a="end" />
    <H x1={1682} x2={2093} y={1612.5} />
    <T x={1675} y={1617} t="1" a="end" />
    <H x1={1682} x2={2093} y={1662.5} dash="5 4" color="#333" />
    <T x={2101} y={1666} t="0" />
    <H x1={1682} x2={2093} y={1826.5} dash="5 4" color="#333" />
    <T x={2101} y={1831} t="1" />

    {/* right levels */}
    {levels.map(([t, w, by, x, y, dash, tag], k) => {
      const last = k === levels.length - 1;
      const thin = dash === "1 2" || last;
      return (
        <g key={t}>
          <T x={2406} y={by} t={t} w={w} {...bi} size={14.5} />
          <H x1={x} x2={3716} y={y} dash={dash} w={t === "Level" ? 2 : 1} color={last ? "#4169f5" : "#000"} />
          {tag && (
            <T
              x={3708}
              y={y - 9}
              t={tag}
              a="end"
              w={tagWidths[tag]}
              size={15}
              i
              b={!thin}
              fill={last ? "#4169f5" : thin ? "#333" : "#000"}
            />
          )}
        </g>
      );
    })}
    {zones.map((z) => (
      <g key={z.y}>
        <T x={z.lx} y={z.ly} w={z.lw} t={z.label} {...bi} />
        {z.code && <T x={2634} y={z.y + z.h / 2 + 6} t={z.code} i w={z.code === "#f44336" ? 52 : 57} size={15} fill="#111" />}
      </g>
    ))}
    <T x={3119} y={563} t="OB" a="end" w={19} {...bi} size={15} />
    <T x={3119} y={655} t="BPR" a="end" w={30} {...bi} size={15} />
    <T x={2872} y={783} t="Original consolidation" a="middle" i w={156} size={15} />
    <T x={2872} y={878} t="Re-Acc" a="middle" i w={47} size={15} />
    <T x={2872} y={970} t="Re-Acc" a="middle" i w={47} size={15} />
    <T x={2872} y={1063} t="SMR" a="middle" w={30} {...bi} size={15} />

    {/* range / wyckoff */}
    <rect x="3205.500" y="634.500" width="474" height="828" stroke="#b22b2b" />
    <path d="M3328 541.500h63a6 6 0 0 1 6 6v29a6 6 0 0 1-6 6h-17l15 34-25-34h-36a6 6 0 0 1-6-6v-29a6 6 0 0 1 6-6z" fill="#fdfdfd" stroke="#777" />
    <T x={3360} y={567} t="Range" a="middle" w={50} {...bi} />
    <T x={3454} y={567} t="or" a="middle" w={18} {...bi} />
    <path d="M3530 541.500h80a6 6 0 0 1 6 6v29a6 6 0 0 1-6 6h-47l-31 38 12-38h-14a6 6 0 0 1-6-6v-29a6 6 0 0 1 6-6z" fill="#dfe0e2" stroke="#222" />
    <T x={3570} y={567} t="Wyckoff" a="middle" w={68} {...bi} />

    {/* deviation pattern */}
    <path d="M707.800 1389Q808 1292 908.500 1389z" fill="#cbc3da" />
    <path d="M707.800 1389Q808 1292 908.500 1389" stroke="#5b3fae" strokeWidth="1.500" />
    <path d="M462.300 1638Q557 1718 652.400 1638z" fill="#cbc3da" />
    <path d="M462.300 1638Q557 1718 652.400 1638" stroke="#5b3fae" strokeWidth="1.500" />
    <rect x="170.500" y="1389.500" width="875" height="249" stroke="#b22b2b" />
    <path
      d="M78.600 1204.300L170.500 1426.600 197 1345.300 233.600 1534 280 1468.800 315.700 1637.300 416 1388 470.700 1580.400 517 1504 552.800 1680 662.200 1402.200 707.800 1568.900 808 1345.700 890 1608.800 935.800 1498.200"
      stroke={c.red}
      strokeWidth="2.200"
    />
    <path
      d="M507.200 1490.800L517 1606 543.700 1552.800 552.800 1678.600 616.600 1460 625.700 1532.600 662.200 1398.500 671.300 1509.200 689.600 1475.200 707.800 1566.600 744.300 1440.300 762.500 1493 808 1345.700"
      stroke="#000"
      strokeWidth="1.300"
    />
    <path d="M762 1216.500h92a6 6 0 0 1 6 6v29a6 6 0 0 1-6 6h-37l-9 73-9-73h-37a6 6 0 0 1-6-6v-29a6 6 0 0 1 6-6z" fill="#fdfdfd" stroke="#666" />
    <T x={808} y={1242} t="Deviation" a="middle" w={82} {...bi} fill="#131722" />
    <path d="M507 1784.500h92a6 6 0 0 0 6-6v-29a6 6 0 0 0-6-6h-37l-9-44-9 44h-37a6 6 0 0 0-6 6v29a6 6 0 0 0 6 6z" fill="#fdfdfd" stroke="#666" />
    <T x={553} y={1769} t="Deviation" a="middle" w={82} {...bi} fill="#131722" />

    {/* vertical markers */}
    <path d="M1255 47V1895" stroke={c.red} strokeWidth="2" strokeDasharray="10 12" />
    <T x={0} y={0} t="NEWS" b size={17} w={50} fill={c.red} transform="translate(1246 102) rotate(-90)" />
    <path d="M2283.500 47V1895" stroke="#000" strokeWidth="2" strokeDasharray="2 4" />
    <T x={0} y={0} t="DO" b size={17} w={24} transform="translate(2276 78) rotate(-90)" />

    <H x1={63} x2={3716} y={937.5} dash="1 2" />
    <Candles />

    {/* logo */}
    <g fill="#131722" stroke="#fff" strokeWidth="2.500" paintOrder="stroke">
      <path d="M77 1862.500h13.500v16.500h-7v-10H77zM100.500 1862.500h8.500l-6.500 16.500h-8z" />
      <circle cx="95.500" cy="1865.800" r="3.300" />
    </g>

    {/* scroll button */}
    <circle cx="3682" cy="1844" r="16" fill="#c9c9c9" />
    <circle cx="3682" cy="1842.700" r="16" fill="#fbfbfb" />
    <path d="M3677 1839l4 4-4 4M3681.500 1836.500l6.500 6.500-6.500 6.500" stroke="#50535e" strokeWidth="2" />

    {/* axes */}
    <rect x="3716" y="47" width="67" height="1879" fill={c.chart} />
    <path d="M3716.500 47V1926M63 1895.500H3783" stroke="#000" />
    <T x={3728} y={67} t="USD" w={22} fill="#222" />
    <path d="M3754 61l3 3 3-3" stroke="#222" strokeWidth="1.500" />
    {Array.from({ length: 26 }, (_, k) => 1.7 - k * 0.05)
      .filter((p) => ![1.65, 1.55, 1.45, 1.1].some((q) => Math.abs(q - p) < 0.001))
      .map((p) => (
        <T key={p} x={3726} y={104 + (1.7 - p) * 1398.7} t={p.toFixed(5)} w={47} fill="#222" />
      ))}
    {levels.map(([, , , , y, , , price], k) => (
      <g key={price}>
        <rect x="3716" y={Math.round(y - 9.5)} width="63" height="19" fill={k === 8 ? "#4169f5" : "#000"} />
        <T x={3726} y={y + 5.5} t={price} b w={47} fill="#fff" />
      </g>
    ))}
    <rect x="3717" y="928" width="66" height="35" fill="#000" />
    <T x={3726} y={943} t="1.10079" b w={47} fill="#fff" />
    <T x={3726} y={959.5} t="02:18:36" w={52} fill="#ccc" />
    <rect x="3716.500" y="976.500" width="62" height="18" rx="2" fill={c.chart} stroke="#000" />
    <T x={3726} y={990.5} t="1.06659" w={47} fill="#222" />
    <svg x="63" y="1896" width="3653" height="30" viewBox="63 1896 3653 30">
      {times.map(([x, t]) => (
        <T key={x} x={x} y={1916} t={t} a="middle" size={13.5} b={t.length > 3} fill="#222" />
      ))}
    </svg>
    <circle cx="3749.500" cy="1910.500" r="5.500" stroke="#131722" strokeWidth="1.500" />
    <circle cx="3749.500" cy="1910.500" r="7.300" stroke="#131722" strokeWidth="2" strokeDasharray="1.600 4.130" />
  </ChartSvg>
);

/* ---------- legend ---------- */
const Legend = styled.div`
  position: absolute;
  top: 52px;
  left: 68px;
  display: flex;
  align-items: center;
  height: 27px;
`;
const LegendBox = styled.div`
  display: flex;
  align-items: center;
  width: 260px;
  height: 27px;
  padding: 0 6px 0 5px;
  border: 1px solid #3d64fb;
  border-radius: 4px;
  background: #fff;
  color: #131722;
  font-size: 16px;
`;
const LegendTitle = styled.span`
  width: 168px;
  letter-spacing: 0;
`;
const Flag = styled.i`
  width: 14px;
  height: 14px;
  margin-right: 15px;
  background: #a44ab8;
  clip-path: polygon(0 0, 100% 0, 70% 50%, 100% 100%, 0 100%);
`;
const LegendIcon = styled.span<{ $ml: number }>`
  margin-left: ${(p) => p.$ml}px;
`;
const Ohlc = styled.div`
  display: flex;
  margin-top: 5px;
  color: #555;
  font-size: 14.5px;
`;
const OhlcPair = styled.span<{ $w: number; $v: number }>`
  display: flex;
  width: ${(p) => p.$w}px;
  letter-spacing: -0.85px;
  b {
    width: ${(p) => p.$v}px;
    color: #131722;
    font-weight: 400;
    letter-spacing: -0.4px;
  }
`;

/* ---------- context menu ---------- */
const Menu = styled.div`
  position: absolute;
  top: 81px;
  left: 296px;
  width: 423px;
  height: 605px;
  padding-top: 8px;
  border-radius: 5px;
  background: ${c.popup};
  box-shadow: 0 2px 5px rgba(0, 0, 0, 0.4);
`;
const MenuRow = styled.div`
  display: flex;
  align-items: center;
  height: 36px;
  padding: 0 15px 0 10px;
  font-size: 15px;
`;
const MenuIcon = styled.span`
  display: grid;
  place-items: center;
  width: 28px;
  margin-right: 9px;
`;
const MenuText = styled.span`
  flex: 1;
  padding-bottom: 1px;
  letter-spacing: -0.1px;
`;
const MenuKey = styled.span`
  padding-right: 7px;
  color: #50535e;
  font-size: 13px;
`;
const MenuLine = styled.div`
  height: 1px;
  margin: 6px 0 7.67px;
  background: ${c.line};
`;

const menu: ([string, string, string?] | null)[] = [
  ["alarmPlus", "Добавить оповещение (1.10078)...", "Alt + A"],
  ["indicatorsPlus", "Добавить индикатор/стратегию на EURUSD..."],
  ["", "Торговля", ">"],
  null,
  ["info", "Информация по инструменту..."],
  ["panelPlus", "Открыть окно данных", "Alt + D"],
  null,
  ["", "Копировать цену (1.10078)"],
  ["", "Вставить", "Ctrl + V"],
  null,
  ["layers", "Порядок слоев", ">"],
  ["pin", "Закрепить на шкале (сейчас справа)", ">"],
  ["hide", "Скрыть"],
  null,
  ["", "Линии", ">"],
  null,
  ["listPlus", "Добавить EURUSD в Список котировок", ">"],
  ["note", "Добавить текстовую заметку для EURUSD", "Alt + N"],
  null,
  ["gear", "Настройки..."],
];

const ContextMenu = () => (
  <Menu>
    {menu.map((m, k) =>
      m === null ? (
        <MenuLine key={k} />
      ) : (
        <MenuRow key={k}>
          <MenuIcon>{m[0] && <Icon name={m[0]} size={30} />}</MenuIcon>
          <MenuText>{m[1]}</MenuText>
          {m[2] === ">" ? <Icon name="chevronRight" size={26} /> : m[2] && <MenuKey>{m[2]}</MenuKey>}
        </MenuRow>
      )
    )}
  </Menu>
);

/* ---------- settings dialog ---------- */
const Dialog = styled.div`
  position: absolute;
  top: 601px;
  left: 1577px;
  display: grid;
  grid-template: 77px 1fr 74px / 225px 1fr;
  width: 686px;
  height: 849px;
  border-radius: 6px;
  background: ${c.popup};
  box-shadow: 0 2px 6px rgba(0, 0, 0, 0.45);
  font-size: 15px;
`;
const DialogHead = styled.div`
  display: flex;
  grid-column: 1 / 3;
  align-items: center;
  justify-content: space-between;
  padding: 0 24px 0 23px;
  border-bottom: 1px solid ${c.line};
  font-size: 21px;
  font-weight: 600;
  letter-spacing: 0.15px;
`;
const DialogNav = styled.div`
  padding-top: 7px;
  border-right: 1px solid ${c.line};
`;
const NavRow = styled.div<{ $on?: boolean }>`
  display: flex;
  align-items: center;
  gap: 10px;
  height: 45px;
  padding-left: 25px;
  letter-spacing: -0.05px;
  ${(p) => p.$on && css`background: #2b2d38; color: #fff; font-weight: 600;`}
`;
const DialogBody = styled.div`
  padding: 1.5px 0 0 24px;
`;
const Section = styled.div`
  height: 53px;
  padding-top: 26px;
  color: #70737e;
  font-size: 12px;
  line-height: 18px;
  letter-spacing: 0.15px;
`;
const Field = styled.div`
  display: flex;
  align-items: center;
  height: 56.1px;
`;
const FieldLabel = styled.div<{ $wide?: boolean }>`
  display: flex;
  flex: none;
  align-items: center;
  gap: 8px;
  width: ${(p) => (p.$wide ? "auto" : "235px")};
  letter-spacing: -0.1px;
`;
const Check = styled.i<{ $on?: boolean }>`
  display: grid;
  place-items: center;
  width: 21px;
  height: 20px;
  border: 1px solid ${(p) => (p.$on ? c.blue : c.line)};
  border-radius: 3px;
  background: ${(p) => (p.$on ? c.blue : "transparent")};
  color: #fff;
`;
const SwatchBox = styled.div<{ $dim?: boolean; $line?: boolean }>`
  display: flex;
  align-items: center;
  gap: 9px;
  width: ${(p) => (p.$line ? 86 : 38)}px;
  height: 38px;
  margin-right: 9px;
  padding-left: 5px;
  border: 1px solid #4a4d58;
  border-radius: 6px;
  background: ${(p) => (p.$dim ? "#2b2d38" : "transparent")};
`;
const Swatch = styled.i<{ $bg: string }>`
  width: 27px;
  height: 27px;
  border-radius: 3px;
  background: ${(p) => p.$bg};
`;
const SwatchLine = styled.i<{ $bg: string }>`
  width: 35px;
  height: 1px;
  background: ${(p) => p.$bg};
`;
const Select = styled.div<{ $w: number }>`
  display: flex;
  align-items: center;
  justify-content: space-between;
  width: ${(p) => p.$w}px;
  height: 38px;
  padding: 0 1px 0 9px;
  border: 1px solid #4a4d58;
  border-radius: 6px;
  letter-spacing: -0.2px;
`;
const DialogFoot = styled.div`
  display: flex;
  grid-column: 1 / 3;
  align-items: center;
  padding: 0 22px 0 23px;
  border-top: 1px solid ${c.line};
`;
const Button = styled.button<{ $primary?: boolean }>`
  width: ${(p) => (p.$primary ? 48 : 88)}px;
  height: 37px;
  margin-left: 14px;
  padding: 0;
  border: 1px solid ${c.blue};
  border-radius: 6px;
  background: ${(p) => (p.$primary ? c.blue : "transparent")};
  color: ${(p) => (p.$primary ? "#fff" : c.blue)};
  font: ${(p) => (p.$primary ? 700 : 400)} 15.5px ${font};
`;

const navItems: [string, string][] = [
  ["candles", "Инструмент"],
  ["status", "Строка статуса"],
  ["pin", "Шкалы"],
  ["pencil", "Оформление"],
  ["zigzag", "Торговля"],
  ["calendar", "События"],
];

const CheckBox = ({ on }: { on?: boolean }) => (
  <Check $on={on}>
    {on && (
      <svg width="12" height="10" viewBox="0 0 12 10" fill="none" stroke="#dfe3f5" strokeWidth="2">
        <path d="M1 5l3.500 3.300L11 1.500" />
      </svg>
    )}
  </Check>
);

const Option = ({ label, on, wide, children }: { label: string; on?: boolean; wide?: boolean; children?: React.ReactNode }) => (
  <Field>
    <FieldLabel $wide={wide}>
      <CheckBox on={on} />
      {label}
    </FieldLabel>
    {children}
  </Field>
);

const Pair = ({ a, b, dim }: { a: string; b: string; dim?: boolean }) => (
  <>
    <SwatchBox $dim={dim}><Swatch $bg={a} /></SwatchBox>
    <SwatchBox $dim={dim}><Swatch $bg={b} /></SwatchBox>
  </>
);

const Settings = () => (
  <Dialog>
    <DialogHead>
      Настройки графика
      <Icon name="close" size={28} />
    </DialogHead>
    <DialogNav>
      {navItems.map(([n, t], k) => (
        <NavRow key={t} $on={k === 0}>
          <Icon name={n} />
          {t}
        </NavRow>
      ))}
    </DialogNav>
    <DialogBody>
      <Section>ЯПОНСКИЕ СВЕЧИ</Section>
      <Option wide label="Цвет баров основан на цене предыдущего закрытия" />
      <Option on label="Тело"><Pair a="#79b768" b="#131620" /></Option>
      <Option on label="Границы"><Pair a="#444650" b="#444650" /></Option>
      <Option on label="Фитиль"><Pair a="#444650" b="#444650" /></Option>
      <Section>ЦЕНОВЫЕ ЛИНИИ</Section>
      <Option on label="Посл. цена">
        <SwatchBox $line><Swatch $bg="#000" /><SwatchLine $bg="#000" /></SwatchBox>
      </Option>
      <Option label="Макс. и мин.">
        <SwatchBox $line $dim>
          <Swatch $bg="linear-gradient(45deg, #8f444c 50%, #3a6e68 50%)" />
          <SwatchLine $bg="#70737e" />
        </SwatchBox>
      </Option>
      <Option label="Цены покупки и продажи"><Pair dim a="#364a9c" b="#8b4144" /></Option>
      <Section>НАСТРОЙКА ДАННЫХ</Section>
      <Field>
        <FieldLabel>Точность</FieldLabel>
        <Select $w={169}>Не задано<Icon name="chevron" size={28} /></Select>
      </Field>
      <Field>
        <FieldLabel>Часовой пояс</FieldLabel>
        <Select $w={169}>(UTC+3) Афины<Icon name="chevron" size={28} /></Select>
      </Field>
    </DialogBody>
    <DialogFoot>
      <Select $w={112}>Шаблон<Icon name="chevron" size={28} /></Select>
      <Spacer />
      <Button>Отмена</Button>
      <Button $primary>Ок</Button>
    </DialogFoot>
  </Dialog>
);

/* ---------- bottom ---------- */
const RangeBar = styled.div`
  display: flex;
  align-items: center;
  height: 44px;
  margin: 1px 0 4px;
  padding-left: 18px;
  border-radius: 0 0 5px 5px;
  background: ${c.panel};
`;
const Tabs = styled.div`
  display: flex;
  align-items: center;
  height: 43px;
  padding-left: 18px;
  border-bottom: 1px solid ${c.gap};
  border-radius: 5px 5px 0 0;
  background: ${c.panel};
`;
const PanelBody = styled.div`
  display: flex;
  flex: 1;
  justify-content: flex-end;
  background: ${c.panel};
`;
const ScrollThumb = styled.i`
  width: 4px;
  height: 100%;
  background: ${c.line};
`;
const ranges: [string, number][] = [
  ["1д", 33], ["5д", 34], ["1мес", 51], ["3мес", 51], ["6мес", 51], ["YTD", 45], ["1г", 30], ["5л", 33], ["Все", 43],
];

const Bottom = () => (
  <>
    <RangeBar>
      {ranges.map(([t, w]) => <Label key={t} $w={w} $ls={-0.3}>{t}</Label>)}
      <Cell $w={16}><Divider /></Cell>
      <Icon name="goTo" size={28} />
      <Spacer />
      <Label $w={140} $ls={0.5}>21:41:24 (UTC+3)</Label>
      <Cell $w={19}><Divider /></Cell>
      <Label $w={29} $color="#b2b5be">%</Label>
      <Label $w={38}>лог</Label>
      <Label $w={44}>авто</Label>
    </RangeBar>
    <Tabs>
      <Label $w={114} $ls={0.2}>Скринер акций</Label>
      <Cell $w={46}><Icon name="chevron" size={26} /></Cell>
      <Label $w={138} $ls={0.15}>Редактор Pine</Label>
      <Label $w={163} $ls={0.4}>Тестер стратегий</Label>
      <Label $w={140} $color={c.blue} $ls={0.05}>Торговая панель</Label>
      <Spacer />
      <Cell $w={40}><Icon name="minimize" size={22} /></Cell>
      <Cell $w={38}><Icon name="full" /></Cell>
    </Tabs>
    <PanelBody><ScrollThumb /></PanelBody>
  </>
);

/* ---------- pointer arrows ---------- */
const Arrows = styled.svg`
  position: absolute;
  top: 0;
  left: 0;
  pointer-events: none;
`;
const pointers = [
  [167.5, 345, 302, 76],
  [187, 548, 302, 654],
  [1465, 553, 1591, 698],
];

const App = () => (
  <Page>
    <Global />
    <Top />
    <Body>
      <LeftRail />
      <Center>
        <Chart />
        <Bottom />
      </Center>
      <RightRail />
    </Body>
    <Legend>
      <LegendBox>
        <LegendTitle>EURUSD · 1Д · FXCM</LegendTitle>
        <Flag />
        <Icon name="eye" size={19} />
        <LegendIcon $ml={12}><Icon name="dots" size={19} /></LegendIcon>
      </LegendBox>
      <Ohlc>
        <OhlcPair $w={42} $v={0}>10240</OhlcPair>
        <OhlcPair $w={96} $v={39}><b>МАКС</b>1.10536</OhlcPair>
        <OhlcPair $w={89} $v={32}><b>МИН</b>1.10049</OhlcPair>
        <OhlcPair $w={89} $v={35}><b>ЗАКР</b>1.10079</OhlcPair>
      </Ohlc>
    </Legend>
    <ContextMenu />
    <Settings />
    <Arrows width="3839" height="2038">
      {pointers.map(([x1, y1, x2, y2]) => {
        const a = (Math.atan2(y2 - y1, x2 - x1) * 180) / Math.PI;
        const len = Math.hypot(x2 - x1, y2 - y1);
        return (
          <g key={x1} transform={`translate(${x1} ${y1}) rotate(${a})`} fill="#f00">
            <rect x="-2" y="-2.300" width={len - 15} height="4.600" rx="2.300" />
            <path d={`M${len} 0l-24 -8.500l2 8.500l-2 8.500z`} />
          </g>
        );
      })}
    </Arrows>
  </Page>
);

export default App;
